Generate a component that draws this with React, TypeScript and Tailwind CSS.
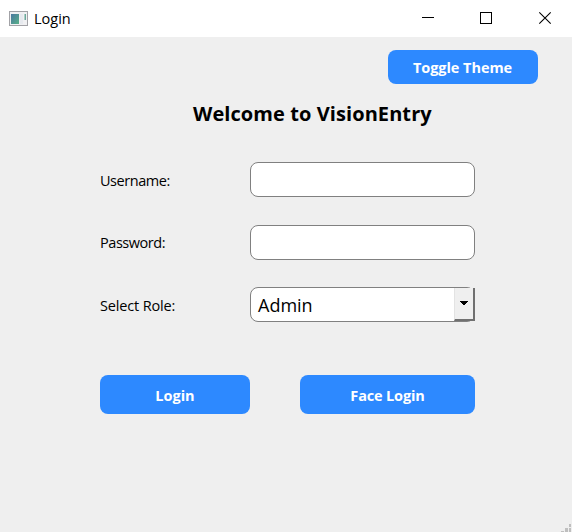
import type { ReactNode } from "react";

function TitleBar() {
  return (
    <header className="flex h-[37px] items-center bg-white">
      <svg className="ml-[9px] shrink-0" width="19" height="16" viewBox="0 0 19 16">
        <defs>
          <linearGradient id="pane" x1="0" y1="0" x2="1" y2="1">
            <stop offset="0" stopColor="#4a78a0" />
            <stop offset="1" stopColor="#58b088" />
          </linearGradient>
        </defs>
        <rect x="0.5" y="0.5" width="18" height="14" fill="#f0f0f2" stroke="#a2a2a6" />
        <rect x="2" y="3" width="8" height="10" fill="url(#pane)" />
        <rect x="11" y="3" width="3" height="10" fill="#e6e9ee" />
        <rect x="15.5" y="3" width="1.5" height="6" fill="#6ba99a" />
      </svg>
      <span className="ml-[6px] pt-[2px] text-[14.5px]">Login</span>
      <svg className="ml-auto mr-[20px]" width="132" height="37" viewBox="0 0 132 37" fill="none" stroke="#000">
        <path d="M2 17.5H14M60.5 12.5H71.5V23.5H60.5Z" shapeRendering="crispEdges" />
        <path d="M119.3 12.3L130.7 23.7M130.7 12.3L119.3 23.7" strokeWidth="1.1" />
      </svg>
    </header>
  );
}

function Field({ label, spacing, children }: { label: string; spacing: string; children?: ReactNode }) {
  return (
    <div className="flex h-[35px] items-center">
      <span className={`w-[150px] text-[14.5px] ${spacing}`}>{label}</span>
      <div className="flex h-[35px] w-[225px] items-center rounded-[8px] border border-[#808080] bg-white">{children}</div>
    </div>
  );
}

export default function App() {
  const button = "flex items-center justify-center rounded-[8px] bg-[#2d89ff] font-bold text-white text-[14.5px]";
  return (
    <div className="flex h-[532px] w-[572px] flex-col overflow-hidden bg-[#efefef] font-['Open_Sans','Noto_Sans',sans-serif] leading-none text-black">
      <TitleBar />
      <main className="flex grow flex-col">
        <button className={`${button} mt-[13px] ml-[388px] h-[34px] w-[150px] pt-[2px] pr-px tracking-[-0.05px]`}>Toggle Theme</button>
        <h1 className="mt-[16px] ml-[193px] flex h-[28px] w-[240px] items-center whitespace-nowrap text-[20px] font-bold tracking-[0.08px]">Welcome to VisionEntry</h1>
        <form className="mt-[34px] ml-[100px] flex w-[375px] flex-col gap-[27.5px]">
          <Field label="Username:" spacing="pt-[4px] tracking-[-0.45px]" />
          <Field label="Password:" spacing="pt-[3px] tracking-[-0.45px]" />
          <Field label="Select Role:" spacing="pt-[4px] tracking-[-0.15px]">
            <span className="ml-[7px] text-[18px]">Admin</span>
            <div className="-mr-px ml-auto flex h-[33px] w-[21px] items-center justify-center border-r-2 border-b-2 border-l border-r-[#707070] border-b-[#707070] border-l-[#e3e3e3] bg-[#efefef]">
              <svg width="8" height="5" viewBox="0 0 8 5" shapeRendering="crispEdges">
                <path d="M0 0H8V1H7V2H6V3H5V4H3V3H2V2H1V1H0Z" />
              </svg>
            </div>
          </Field>
        </form>
        <div className="mt-[53px] ml-[100px] flex gap-[50px]">
          <button className={`${button} h-[39.4px] w-[150px] pt-[4px]`}>Login</button>
          <button className={`${button} h-[39.4px] w-[175px] pt-[4px] tracking-[-0.15px]`}>Face Login</button>
        </div>
        <svg className="mt-auto ml-auto" width="11" height="8" viewBox="0 0 11 8" fill="#bfbfbf" shapeRendering="crispEdges">
          <path d="M8 0h2v3h-2zM4 4h3v4h-3zM8 4h2v4h-2zM0 7h3v1h-3z" />
        </svg>
      </main>
    </div>
  );
}
